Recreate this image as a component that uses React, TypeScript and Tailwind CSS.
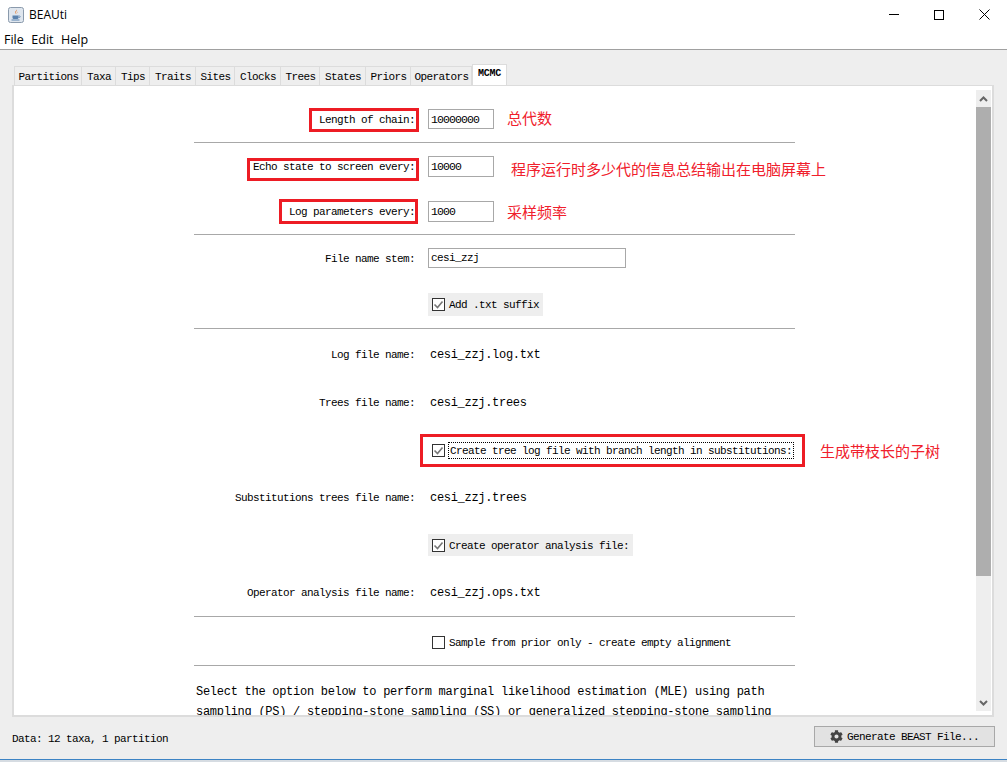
import { FaCog } from "react-icons/fa";
import type { ReactNode } from "react";

const tabs = [
  { name: "Partitions", width: "w-[68px]" },
  { name: "Taxa", width: "w-[34px]" },
  { name: "Tips", width: "w-[34px]" },
  { name: "Traits", width: "w-[46px]" },
  { name: "Sites", width: "w-[39px]" },
  { name: "Clocks", width: "w-[46px]" },
  { name: "Trees", width: "w-[39px]" },
  { name: "States", width: "w-[46px]" },
  { name: "Priors", width: "w-[45px]" },
  { name: "Operators", width: "w-[61px]" },
];

function JavaIcon() {
  return (
    <svg width="16" height="16" viewBox="0 0 16 16">
      <rect x="0.5" y="0.5" width="15" height="15" rx="2" fill="#dfe6ee" stroke="#8a9aac" />
      <path d="M8.5 2.5c1 1.6-1.8 2.6-.8 4.6-1.8-1.4.6-3 .8-4.6z" fill="#e2711d" />
      <path d="M9.8 4.5c.2 1-1.3 1.5-.8 2.6-1-.9.4-1.6.8-2.6z" fill="#e2711d" />
      <path d="M4.5 8.5h6v2.2c0 .8-.8 1.3-1.5 1.3h-3c-.7 0-1.5-.5-1.5-1.3z" fill="#5b82ad" />
      <path d="M10.5 9h1.2c.7 0 .7 1.5-.2 1.5h-1" fill="none" stroke="#5b82ad" strokeWidth="0.8" />
      <path d="M3.5 13h8" stroke="#5b82ad" strokeWidth="1" />
    </svg>
  );
}

function CheckBox({ checked }: { checked: boolean }) {
  return (
    <svg width="13" height="13" viewBox="0 0 13 13" className="shrink-0">
      <rect x="0.5" y="0.5" width="12" height="12" fill="#fff" stroke="#333" />
      {checked && <path d="M2.5 6.5l3 3 5-6" fill="none" stroke="#777" strokeWidth="1.6" />}
    </svg>
  );
}

function Separator({ className }: { className: string }) {
  return <div className={`h-px bg-[#a8a8a8] ${className}`} />;
}

type FormRowProps = {
  label?: string;
  className: string;
  children: ReactNode;
};

function FormRow({ label, className, children }: FormRowProps) {
  return (
    <div className={`relative flex items-center ${className}`}>
      <span className="w-[222px] shrink-0 whitespace-pre pr-px pt-[2px] text-right">{label}</span>
      <div className="ml-3 flex items-center">{children}</div>
    </div>
  );
}

function NumberInput({ value }: { value: string }) {
  return (
    <div className="flex h-full w-[66px] items-center border border-[#a8a8a8] bg-white pl-[2px] pt-px text-[11.5px] tracking-[-0.9px]">
      {value}
    </div>
  );
}

function Note({ className, children }: { className: string; children: ReactNode }) {
  return (
    <span className={`whitespace-nowrap font-['Noto_Sans_CJK_SC',sans-serif] text-[15px] leading-5 tracking-normal text-[#f0202c] ${className}`}>
      {children}
    </span>
  );
}

function RedBox({ className }: { className: string }) {
  return <div className={`pointer-events-none absolute border-[3px] border-[#ed1c24] ${className}`} />;
}

function Value({ children }: { children: ReactNode }) {
  return <span className="pl-[2px] pt-[2px] text-[12px] tracking-[-0.3px]">{children}</span>;
}

export default function App() {
  return (
    <div className="flex h-[762px] w-[1007px] flex-col overflow-hidden bg-[#eeeeee] font-['Liberation_Mono',monospace] text-[11px] leading-none tracking-[-0.6px] text-black">
      <header className="h-[50px] shrink-0 border-b border-[#a0a0a0] bg-white font-['Open_Sans',sans-serif] tracking-normal">
        <div className="flex h-[29px] items-center">
          <div className="ml-2 flex items-center gap-[5px] text-[12px]">
            <JavaIcon />
            <span>BEAUti</span>
          </div>
          <div className="ml-auto flex">
            <div className="flex h-[29px] w-[45px] items-center justify-center">
              <div className="h-px w-[10px] bg-black" />
            </div>
            <div className="flex h-[29px] w-[45px] items-center justify-center">
              <div className="size-[10px] border border-black" />
            </div>
            <div className="flex h-[29px] w-[46px] items-center justify-center">
              <svg width="11" height="11" viewBox="0 0 11 11">
                <path d="M.5.5l10 10M10.5.5l-10 10" stroke="#000" fill="none" />
              </svg>
            </div>
          </div>
        </div>
        <nav className="flex gap-[7.5px] pl-1 pt-px text-[12.5px] leading-[20px]">
          <span>File</span>
          <span>Edit</span>
          <span>Help</span>
        </nav>
      </header>

      <main className="flex min-h-0 flex-1 flex-col pl-3 pr-[13px] pt-[14px]">
        <div className="flex h-[21px] shrink-0 items-end pl-[2px]">
          {tabs.map((tab) => (
            <div
              className={`flex h-[19px] shrink-0 items-center justify-center border-r border-t border-[#dcdcdc] pl-px pt-[3px] first:border-l ${tab.width}`}
              key={tab.name}
            >
              {tab.name}
            </div>
          ))}
          <div className="flex h-[21px] w-[35px] shrink-0 items-center justify-center border-x border-t border-[#dcdcdc] bg-white pb-[2px] text-[10px] font-bold tracking-[-0.3px]">
            MCMC
          </div>
        </div>

        <section className="flex h-[632px] shrink-0 border-2 border-t-0 border-[#dcdcdc] bg-white [border-top-width:1px]">
          <div className="min-w-0 flex-1 overflow-hidden">
            <div className="ml-[180px] w-[601px] pt-[23px]">
              <FormRow label="Length of chain:" className="h-5">
                <div className="h-5">
                  <NumberInput value="10000000" />
                </div>
                <Note className="ml-[13px] -translate-y-px">总代数</Note>
                <RedBox className="left-[115px] -top-px h-6 w-[110px]" />
              </FormRow>
              <Separator className="mt-[13px]" />
              <FormRow label="Echo state to screen every:" className="mt-[13px] h-[21px]">
                <div className="h-[21px]">
                  <NumberInput value="10000" />
                </div>
                <Note className="ml-[17px] translate-y-[2px]">程序运行时多少代的信息总结输出在电脑屏幕上</Note>
                <RedBox className="left-[53px] top-[2px] h-[23px] w-[172px]" />
              </FormRow>
              <FormRow label="Log parameters every:" className="mt-6 h-[21px]">
                <div className="h-[21px]">
                  <NumberInput value="1000" />
                </div>
                <Note className="ml-[13px] tracking-[0.3px]">采样频率</Note>
                <RedBox className="left-[85px] -top-[2px] h-[25px] w-[139px]" />
              </FormRow>
              <Separator className="mt-3" />
              <FormRow label="File name stem:" className="mt-[13px] h-5">
                <div className="flex h-5 w-[198px] items-center border border-[#a8a8a8] pl-[2px] pt-px">cesi_zzj</div>
              </FormRow>
              <FormRow className="mt-[25px] h-[23px]">
                <div className="flex h-[23px] w-[115px] items-center gap-[4px] bg-[#eeeeee] pl-1">
                  <CheckBox checked />
                  <span className="pt-[2px]">Add .txt suffix</span>
                </div>
              </FormRow>
              <Separator className="mt-3" />
              <FormRow label="Log file name:" className="mt-[15px] h-5">
                <Value>cesi_zzj.log.txt</Value>
              </FormRow>
              <FormRow label="Trees file name:" className="mt-7 h-5">
                <Value>cesi_zzj.trees</Value>
              </FormRow>
              <FormRow className="mt-7 h-5">
                <div className="flex h-5 items-center gap-[3px] pl-1">
                  <CheckBox checked />
                  <span className="border border-dotted border-black px-px pb-px pt-[3px]">
                    Create tree log file with branch length in substitutions:
                  </span>
                </div>
                <Note className="absolute left-[626px] top-[1px]">生成带枝长的子树</Note>
                <RedBox className="left-[226px] -top-[6px] h-[33px] w-[385px]" />
              </FormRow>
              <FormRow label="Substitutions trees file name:" className="mt-[27px] h-5">
                <Value>cesi_zzj.trees</Value>
              </FormRow>
              <FormRow className="mt-[27px] h-[22px]">
                <div className="flex h-[22px] w-[205px] items-center gap-[4px] bg-[#eeeeee] pl-1">
                  <CheckBox checked />
                  <span className="pt-[2px]">Create operator analysis file:</span>
                </div>
              </FormRow>
              <FormRow label="Operator analysis file name:" className="mt-[26px] h-5">
                <Value>cesi_zzj.ops.txt</Value>
              </FormRow>
              <Separator className="mt-[14px]" />
              <FormRow className="mt-[15px] h-5">
                <div className="flex items-center gap-[4px] pl-1">
                  <CheckBox checked={false} />
                  <span className="pt-[2px]">Sample from prior only - create empty alignment</span>
                </div>
              </FormRow>
              <Separator className="mt-[13px]" />
              <p className="mt-4 whitespace-pre pl-[2px] text-[12px] leading-5 tracking-[-0.27px]">
                {"Select the option below to perform marginal likelihood estimation (MLE) using path\nsampling (PS) / stepping-stone sampling (SS) or generalized stepping-stone sampling"}
              </p>
            </div>
          </div>

          <div className="my-[4px] mr-px flex w-[15px] shrink-0 flex-col bg-[#eeeeee]">
            <div className="flex h-[17px] shrink-0 items-center justify-center">
              <svg width="9" height="6" viewBox="0 0 9 6">
                <path d="M1 5l3.5-3.5L8 5" fill="none" stroke="#666" strokeWidth="2" />
              </svg>
            </div>
            <div className="h-[469px] shrink-0 bg-[#aeaeae]" />
            <div className="mt-auto flex h-[17px] shrink-0 items-center justify-center">
              <svg width="9" height="6" viewBox="0 0 9 6">
                <path d="M1 1l3.5 3.5L8 1" fill="none" stroke="#666" strokeWidth="2" />
              </svg>
            </div>
          </div>
        </section>

        <footer className="flex flex-1 items-start justify-between pt-[9px]">
          <span className="mt-[8px]">Data: 12 taxa, 1 partition</span>
          <div className="-mr-px flex h-[21px] w-[181px] items-center justify-center gap-[4px] border border-[#a8a8a8] bg-[#e2e2e2]">
            <FaCog className="size-[13px] text-[#444]" />
            <span className="pt-[2px]">Generate BEAST File...</span>
          </div>
        </footer>
      </main>

      <div className="h-[3px] shrink-0 border-t border-[#3c83c4] bg-[#d6dce2]" />
    </div>
  );
}
